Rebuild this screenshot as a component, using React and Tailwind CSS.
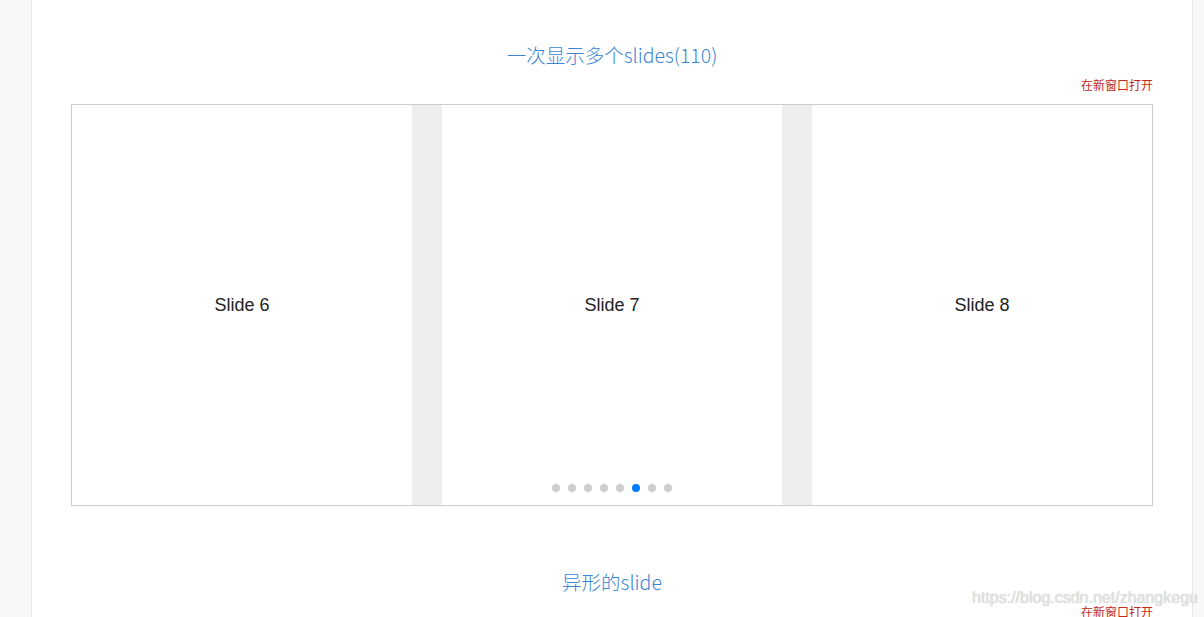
export default function App() {
  const slides = [6, 7, 8];
  const dots = [0, 1, 2, 3, 4, 5, 6, 7];
  const active = 5;

  return (
    <div className="relative h-[617px] overflow-hidden bg-[#f8f8f8] font-['Noto_Sans_CJK_SC',sans-serif]">
      <div className="ml-[31px] w-[1162px] min-h-[617px] border-x border-[#e6e6e6] bg-white px-[39px] pt-[41px]">
        <h3 className="text-center text-[19.5px] leading-[28px] font-light text-[#3a85d5]">
          一次显示多个slides(110)
        </h3>
        <div className="mt-[8px] text-right text-[12px] leading-[16px] text-[#c3291c]">
          在新窗口打开
        </div>
        <div className="relative mt-[11px] flex h-[402px] gap-[30px] border border-[#cccccc] bg-[#eeeeee]">
          {slides.map((n) => (
            <div
              key={n}
              className="flex flex-1 items-center justify-center bg-white font-['Liberation_Sans',sans-serif] text-[18px] text-[#222]"
            >
              Slide {n}
            </div>
          ))}
          <div className="absolute bottom-[13px] left-0 right-0 flex justify-center gap-[8px]">
            {dots.map((d) => (
              <span
                key={d}
                className={
                  d === active
                    ? "h-[8px] w-[8px] rounded-full bg-[#007aff]"
                    : "h-[8px] w-[8px] rounded-full bg-[#cccccc]"
                }
              />
            ))}
          </div>
        </div>
        <h3 className="mt-[62px] text-center text-[19.5px] leading-[28px] font-light text-[#3a85d5]">
          异形的slide
        </h3>
        <div className="mt-[8px] text-right text-[12px] leading-[16px] text-[#c3291c]">
          在新窗口打开
        </div>
      </div>
      <div className="absolute left-[972px] top-[588px] font-['Liberation_Sans',sans-serif] text-[16px] leading-[20px] text-[#e4e4e4] [text-shadow:0_0_1px_#bbbbbb]">
        https://blog.csdn.net/zhangkegu
      </div>
    </div>
  );
}
